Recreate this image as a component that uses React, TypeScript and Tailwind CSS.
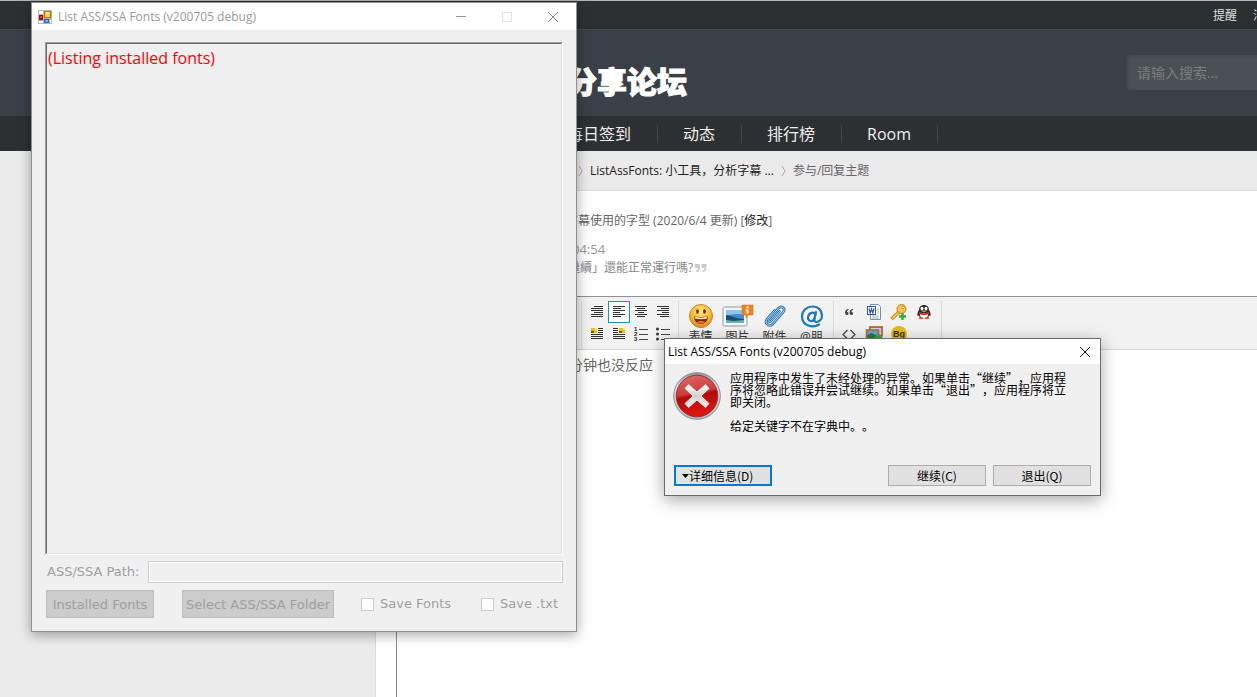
import React, { useState } from "react";
import clsx from "clsx";

type Tool = { label: string; icon: React.ReactNode };

/* Four text lines, each given as [start, end] */
function Lines({ rows }: { rows: [number, number][] }) {
    return (
        <svg width="16" height="16" viewBox="0 0 16 16" shapeRendering="crispEdges" aria-hidden="true">
            {rows.map(([a, b], i) => (
                <rect key={i} x={a} y={2 + i * 2} width={b - a} height="1" fill="#333" />
            ))}
        </svg>
    );
}

function FloatIcon({ right }: { right?: boolean }) {
    return (
        <svg width="16" height="16" viewBox="0 0 16 16" shapeRendering="crispEdges" aria-hidden="true">
            <g fill="#333">
                <rect x={right ? 2 : 9} y="2" width="5" height="1" />
                <rect x={right ? 2 : 9} y="4" width="5" height="1" />
                <rect x={right ? 2 : 9} y="6" width="5" height="1" />
                <rect x="2" y="8" width="12" height="1" />
                <rect x="2" y="10" width="12" height="1" />
                <rect x="2" y="12" width="12" height="1" />
            </g>
            <rect x={right ? 8 : 2} y="2" width="6" height="5" fill="#e8c020" />
            <rect x={right ? 8 : 2} y="5" width="3" height="2" fill="#7a5a10" />
            <rect x={right ? 12 : 6} y="2" width="2" height="2" fill="#f8e890" />
        </svg>
    );
}

function ListIcon({ ordered }: { ordered?: boolean }) {
    return (
        <svg width="16" height="16" viewBox="0 0 16 16" aria-hidden="true">
            <g fill="#444" shapeRendering="crispEdges">
                <rect x="6" y="3" width="9" height="1" />
                <rect x="6" y="8" width="9" height="1" />
                <rect x="6" y="13" width="9" height="1" />
            </g>
            {[2, 7, 12].map((y, i) =>
                ordered ? (
                    <text key={y} x="1" y={y + 3} fontSize="6" fontFamily="Liberation Sans, sans-serif" fontWeight="700" fill="#222">{i + 1}</text>
                ) : (
                    <circle key={y} cx="2.5" cy={y + 1} r="1.5" fill="#333" />
                )
            )}
        </svg>
    );
}

const alignTools: Tool[] = [
    { label: "自动排版", icon: <Lines rows={[[5, 14], [2, 14], [2, 14], [5, 14], [2, 14], [2, 14]]} /> },
    { label: "居左", icon: <Lines rows={[[2, 14], [2, 10], [2, 14], [2, 9], [2, 14], [2, 10]]} /> },
    { label: "居中", icon: <Lines rows={[[2, 14], [4, 12], [2, 14], [5, 11], [2, 14], [4, 12]]} /> },
    { label: "居右", icon: <Lines rows={[[2, 14], [6, 14], [2, 14], [7, 14], [2, 14], [5, 14]]} /> },
    { label: "左浮动", icon: <FloatIcon /> },
    { label: "右浮动", icon: <FloatIcon right /> },
    { label: "排序的列表", icon: <ListIcon ordered /> },
    { label: "未排序列表", icon: <ListIcon /> },
];

const mediaTools: Tool[] = [
    {
        label: "表情",
        icon: (
            <svg width="26" height="26" viewBox="0 0 26 26" aria-hidden="true">
                <defs>
                    <radialGradient id="face" cx="50%" cy="30%" r="70%">
                        <stop offset="0" stopColor="#ffe58a" />
                        <stop offset="0.6" stopColor="#fbb92c" />
                        <stop offset="1" stopColor="#dd8712" />
                    </radialGradient>
                </defs>
                <circle cx="13" cy="13" r="11.5" fill="url(#face)" stroke="#bb8730" />
                <ellipse cx="9.500" cy="8.500" rx="1.4" ry="2.3" fill="#6b3308" />
                <ellipse cx="16.500" cy="8.500" rx="1.4" ry="2.3" fill="#6b3308" />
                <path d="M6 13c4 1.500 10 1.500 14 0 0 5-3 8-7 8s-7-3-7-8z" fill="#7b2d0a" />
                <path d="M6.500 13.500c4 1.500 9 1.500 13 0l-.5 2c-4 1-8 1-12 0z" fill="#ffe9cf" />
                <path d="M9 19c2-1.500 6-1.500 8 0-2 2-6 2-8 0z" fill="#ef6a45" />
            </svg>
        ),
    },
    {
        label: "图片",
        icon: (
            <svg width="32" height="26" viewBox="0 0 32 26" aria-hidden="true">
                <rect x="1" y="4" width="24" height="19" rx="1.500" fill="#f3f6f8" stroke="#8d9aa5" />
                <rect x="4" y="7" width="18" height="13" fill="#3f8fd4" />
                <path d="M4 7h18v5c-5-2-12-1-18 1z" fill="#8cc4ee" />
                <path d="M4 12c5 0 7 3 18 4v4h-18z" fill="#1d4d75" />
                <path d="M4 17l7 1 11-1v3h-18z" fill="#6fb0a8" />
                <path d="M20 2h11v10h-5l-2 3v-3h-4z" fill="#f08019" stroke="#d96d0c" strokeWidth=".5" />
                <rect x="24.500" y="3.500" width="2" height="2" fill="#fff" />
                <path d="M23.500 6.500h3v4h-2v-3h-1z" fill="#fff" />
            </svg>
        ),
    },
    {
        label: "附件",
        icon: (
            <svg width="26" height="26" viewBox="0 0 26 26" fill="none" strokeLinecap="round" strokeLinejoin="round" aria-hidden="true">
                <path d="M17.500 8.500l-8.500 9.500c-1.500 1.500-3.500 0-2.200-1.800l9.700-11c3-3.300 7.500.3 4.800 3.800l-10.300 11.800c-3.500 4-9-.5-6-4.600l7.500-8.700" stroke="#2a73ad" strokeWidth="2.600" />
                <path d="M17.500 8.500l-8.500 9.500c-1.500 1.500-3.500 0-2.200-1.800l9.700-11c3-3.300 7.500.3 4.800 3.800l-10.300 11.800c-3.500 4-9-.5-6-4.600l7.500-8.700" stroke="#a8d4f2" strokeWidth="1" />
            </svg>
        ),
    },
    {
        label: "@朋",
        icon: (
            <svg width="26" height="26" viewBox="0 0 26 26" fill="none" stroke="#1f78b8" strokeLinecap="round" aria-hidden="true">
                <path d="M20 21.500c-6 4-17 1.500-17-8 0-6 5-10 10.500-10 6 0 9.500 4 9.500 9 0 4-3 6.500-5.500 6.500-2 0-2.500-1.500-2-3.500l1.500-6.500" strokeWidth="2.200" />
                <path d="M16.500 12c-1-3.500-6.500-3-7.500 2-.5 4 4.500 6 6.500 1.500" strokeWidth="2.200" />
            </svg>
        ),
    },
];

const extraTools: Tool[] = [
    {
        label: "引用",
        icon: (
            <svg width="16" height="16" viewBox="0 0 16 16" fill="#444" aria-hidden="true">
                <path d="M7.500 5c-2 0-3.500 1.500-3.500 3.500 0 1.500.7 2.500 1.800 2.500 1 0 1.700-.7 1.700-1.600s-.7-1.500-1.500-1.500c0-1 .5-1.700 1.500-2zM12 5c-2 0-3.500 1.500-3.500 3.500 0 1.500.7 2.500 1.800 2.500 1 0 1.700-.7 1.700-1.600s-.7-1.500-1.500-1.500c0-1 .5-1.700 1.500-2z" />
            </svg>
        ),
    },
    {
        label: "Word",
        icon: (
            <svg width="16" height="16" viewBox="0 0 16 16" fill="none" aria-hidden="true">
                <path d="M4.500.5h8l2 2.500v12.500h-10z" fill="#fff" stroke="#7d9097" />
                <path d="M11 5h2M11 7h2M11 9h2M6 12h7M6 14h7" stroke="#9fb6c8" />
                <rect x="1.500" y="2.500" width="8" height="8" fill="#fff" stroke="#2757a6" />
                <path d="M3 4.500l1.200 4.500 1.300-4 1.300 4 1.200-4.500" stroke="#2757a6" strokeWidth="1.200" />
            </svg>
        ),
    },
    {
        label: "密码",
        icon: (
            <svg width="18" height="18" viewBox="0 0 18 18" fill="none" aria-hidden="true">
                <path d="M10 8l-8.500 8" stroke="#b97f12" strokeWidth="3.500" />
                <path d="M10 8l-8 7.500" stroke="#f3c344" strokeWidth="1.800" />
                <circle cx="11.500" cy="6" r="4.500" fill="#f5c64b" stroke="#bb8415" />
                <circle cx="13" cy="4.500" r="1.300" fill="#fff" stroke="#a87410" strokeWidth=".6" />
                <path d="M12.500 10v7M9 13.500h7" stroke="#35ad38" strokeWidth="2.400" />
            </svg>
        ),
    },
    {
        label: "QQ",
        icon: (
            <svg width="16" height="16" viewBox="0 0 16 16" aria-hidden="true">
                <path d="M8 1c3.500 0 5 2.500 5 5 1.500 2 2 4 1.300 6l-1.300-.5-1 2.500h-8l-1-2.500-1.300.5c-.7-2-.2-4 1.300-6 0-2.500 1.500-5 5-5z" fill="#2c2c2c" />
                <path d="M4 9h8c.5 3-1 5-4 5s-4.500-2-4-5z" fill="#fff" />
                <ellipse cx="6" cy="4.500" rx="1.500" ry="1.700" fill="#fff" />
                <ellipse cx="10" cy="4.500" rx="1.500" ry="1.700" fill="#fff" />
                <path d="M4.500 6.500h7l-3.500 1.800z" fill="#f5a81c" />
                <path d="M3 8c3 1.500 7 1.500 10 0v2c-3 1.500-7 1.500-10 0z" fill="#db2b23" />
                <ellipse cx="5" cy="14.300" rx="2.500" ry="1" fill="#d8632a" />
                <ellipse cx="11" cy="14.300" rx="2.500" ry="1" fill="#d8632a" />
            </svg>
        ),
    },
    {
        label: "代码",
        icon: (
            <svg width="16" height="16" viewBox="0 0 16 16" fill="none" stroke="#444" strokeWidth="1.200" aria-hidden="true">
                <path d="M6.500 4l-4.500 4.500 4.500 4.500M9.500 4l4.500 4.500-4.500 4.500" />
            </svg>
        ),
    },
    {
        label: "相册",
        icon: (
            <svg width="18" height="16" viewBox="0 0 18 16" fill="none" aria-hidden="true">
                <rect x="5" y="1" width="12" height="9" fill="#b7d9f4" stroke="#b5521b" strokeWidth="1.600" />
                <rect x="1.500" y="4" width="12" height="9" fill="#63a5dd" stroke="#c4662a" strokeWidth="1.600" />
                <path d="M2.500 9l4-2 6 3v2h-10z" fill="#2a7a35" />
                <path d="M13.500 8v7M10 11.500h7" stroke="#35ad38" strokeWidth="2.400" />
            </svg>
        ),
    },
    {
        label: "背景音乐",
        icon: (
            <svg width="16" height="16" viewBox="0 0 16 16" aria-hidden="true">
                <circle cx="8" cy="8" r="8" fill="#e3b91b" />
                <text x="8" y="11" textAnchor="middle" fontSize="9" fontFamily="Liberation Sans, sans-serif" fontWeight="700" fill="#3c3208">Bg</text>
            </svg>
        ),
    },
];

const navItems = ["每日签到", "动态", "排行榜", "Room"];

function CrumbArrow() {
    return (
        <svg width="5" height="12" viewBox="0 0 5 12" fill="none" stroke="#aaa" aria-hidden="true">
            <path d="M1 1l3 5-3 5" />
        </svg>
    );
}

function CloseIcon({ color }: { color: string }) {
    return (
        <svg width="12" height="12" viewBox="0 0 12 12" fill="none" stroke={color} aria-hidden="true">
            <path d="M1 1l10 10M11 1L1 11" />
        </svg>
    );
}

function Toolbar() {
    const [align, setAlign] = useState("居左");

    return (
        <div className="flex h-[53px] items-start overflow-hidden border-b border-[#d5d5d5] bg-[#f2f2f2] pt-1 pl-[184px]">
            <div className="flex h-12 items-start border-x border-[#dcdcdc] px-1">
                <div className="grid grid-cols-4">
                    {alignTools.map((t) => (
                        <button key={t.label} aria-label={t.label} onClick={() => setAlign(t.label)}
                            className={clsx("flex size-[22px] items-center justify-center border", align === t.label ? "border-[#1595c5] bg-white" : "border-transparent")}>
                            {t.icon}
                        </button>
                    ))}
                </div>
            </div>
            <div className="flex h-12 items-start border-r border-[#dcdcdc] px-[3px]">
                {mediaTools.map((t) => (
                    <button key={t.label} className="flex w-[37px] shrink-0 flex-col items-center text-[12px] leading-4 whitespace-nowrap text-[#333]">
                        <span className="flex h-7 items-end">{t.icon}</span>
                        <span>{t.label}</span>
                    </button>
                ))}
            </div>
            <div className="grid h-12 grid-cols-4 content-start border-r border-[#dcdcdc] pr-[5px] pl-[2px]">
                {extraTools.map((t) => (
                    <button key={t.label} aria-label={t.label} className="flex h-[22px] w-[25px] items-center justify-center">
                        {t.icon}
                    </button>
                ))}
            </div>
        </div>
    );
}

function Forum() {
    return (
        <div className="flex min-h-screen flex-col bg-[#ebebeb] text-[12px] whitespace-nowrap">
            <header className="text-white">
                <div className="flex h-[30px] items-center justify-end gap-4 border-t border-b border-t-[#b2b5b3] border-b-[#42484d] bg-[#2d3032] pt-[2px] text-[#ddd]">
                    <a href="#notice">提醒</a>
                    <a href="#message" className="-mr-5">消息</a>
                </div>
                <div className="flex h-[86px] items-start justify-between bg-[#3a4047] pt-[25px] pl-[567px]">
                    <a href="#home" className="pt-[9px] text-[30px] leading-9 font-black [-webkit-text-stroke:1px_white]">分享论坛</a>
                    <input type="search" aria-label="搜索" placeholder="请输入搜索..."
                        className="-mr-5 h-[35px] w-[150px] rounded-[3px] bg-[#495056] px-[10px] text-[14px] text-white shadow-[inset_1px_1px_3px_#41474d] placeholder:text-[#7d7d7d]" />
                </div>
                <nav className="flex h-[35px] items-center bg-[#2d3032] pl-[542px] text-[16px]">
                    {navItems.map((n) => (
                        <a key={n} href="#nav" className="flex h-[18px] items-center border-r border-[#42464a] pr-[26px] pl-[25px] text-[#eee]">{n}</a>
                    ))}
                </nav>
            </header>
            <div className="flex flex-1">
                <aside className="w-[376px] shrink-0 border-r border-[#dcdcdc]" />
                <div className="flex min-w-0 flex-1 flex-col bg-white">
                    <div className="flex h-10 items-center gap-[7px] border-b border-[#dcdcdc] bg-[#eaeaea] pl-[202px] text-[#666]">
                        <CrumbArrow />
                        <a href="#topic" className="text-[#222]">ListAssFonts: 小工具，分析字幕 ...</a>
                        <CrumbArrow />
                        <span>参与/回复主题</span>
                    </div>
                    <main className="flex flex-1 flex-col pl-5">
                        <div className="flex h-[105px] flex-col pt-5 pl-[170px] text-[#666]">
                            <p className="leading-5">字幕使用的字型 (2020/6/4 更新) [<a href="#edit" className="text-[#222]">修改</a>]</p>
                            <p className="pt-2 pl-[6px] text-[13px] leading-5 text-[#999]">04:54</p>
                            <p className="flex items-center gap-[2px] pl-[2px] leading-[18px] text-[#888]">
                                繼續」還能正常運行嗎?
                                <svg width="12" height="8" viewBox="0 0 12 8" fill="#ccc" aria-hidden="true">
                                    <path d="M0 0h5v4c0 2-1.500 4-4 4v-1.500c1.200-.3 1.800-1 2-2.500H0zM6.500 0h5v4c0 2-1.500 4-4 4v-1.500c1.200-.3 1.800-1 2-2.500h-3z" />
                                </svg>
                            </p>
                        </div>
                        <div className="flex-1 border-t border-l border-[#909090]">
                            <Toolbar />
                            <p className="pt-[5px] pl-[172px] text-[14px] leading-5 text-[#666]">分钟也没反应</p>
                        </div>
                    </main>
                </div>
            </div>
        </div>
    );
}

function FontsWindow() {
    return (
        <section className="absolute top-[2px] left-[31px] w-[546px] border border-[#8f9090] bg-[#f0f0f0] shadow-[0_3px_12px_rgba(0,0,0,0.35)]">
            <div className="flex h-[27px] items-center bg-white pl-[6px] text-[12px] text-[#999]">
                <svg width="14" height="14" viewBox="0 0 14 14" shapeRendering="crispEdges" aria-hidden="true">
                    <rect width="14" height="14" fill="#b5b5b5" />
                    <path d="M1 1h4v3H1zM1 11h4v2H1zM12 10h1v3h-1z" fill="#fff" />
                    <rect x="6" y="1" width="7" height="7" fill="#b07d08" />
                    <rect x="7" y="2" width="5" height="5" fill="#fbcb35" />
                    <rect x="8" y="2" width="3" height="2" fill="#fde898" />
                    <rect x="1" y="5" width="4" height="5" fill="#8e1410" />
                    <rect x="2" y="6" width="2" height="2" fill="#e4452c" />
                    <rect x="6" y="9" width="5" height="4" fill="#2a63c8" />
                    <rect x="7" y="10" width="3" height="2" fill="#75acf5" />
                </svg>
                <h2 className="pl-[6px]">List ASS/SSA Fonts (v200705 debug)</h2>
                <div className="ml-auto flex">
                    <button aria-label="最小化" className="flex h-[26px] w-[46px] items-center justify-center">
                        <span className="w-[10px] border-t border-[#999]" />
                    </button>
                    <button aria-label="最大化" disabled className="flex h-[26px] w-[46px] items-center justify-center">
                        <span className="size-[10px] border border-[#e4e4e4]" />
                    </button>
                    <button aria-label="关闭" className="flex h-[26px] w-[46px] items-center justify-center">
                        <CloseIcon color="#888" />
                    </button>
                </div>
            </div>
            <div className="px-[13px] pt-3 pb-[13px] font-['DejaVu_Sans',sans-serif] text-[13px] text-[#a0a0a0]">
                <div className="border border-t-[#a0a0a0] border-r-white border-b-white border-l-[#a0a0a0]">
                    <textarea readOnly aria-label="Output" defaultValue="(Listing installed fonts)"
                        className="block h-[511px] w-full resize-none border border-t-[#696969] border-r-[#e3e3e3] border-b-[#e3e3e3] border-l-[#696969] px-px py-[2px] font-['Open_Sans',sans-serif] text-[16px] leading-6 text-[#f00] outline-none" />
                </div>
                <div className="flex items-center pt-[6px]">
                    <label htmlFor="path" className="w-[103px] pl-[2px]">ASS/SSA Path:</label>
                    <input id="path" disabled className="h-[22px] min-w-0 flex-1 border border-[#ccc] bg-[#f0f0f0] shadow-[inset_0_0_0_1px_white]" />
                </div>
                <div className="flex items-center pt-[7px] whitespace-nowrap">
                    <button disabled className="ml-px h-7 w-[108px] border border-[#bfbfbf] bg-[#ccc] pt-px">Installed Fonts</button>
                    <button disabled className="ml-7 h-7 w-[152px] border border-[#bfbfbf] bg-[#ccc] pt-px">Select ASS/SSA Folder</button>
                    <label className="ml-[27px] flex w-[120px] items-center gap-[6px]">
                        <input type="checkbox" disabled className="size-[13px] appearance-none border border-[#ccc] bg-white" />
                        Save Fonts
                    </label>
                    <label className="flex items-center gap-[6px]">
                        <input type="checkbox" disabled className="size-[13px] appearance-none border border-[#ccc] bg-white" />
                        Save .txt
                    </label>
                </div>
            </div>
        </section>
    );
}

function ErrorDialog() {
    return (
        <section role="alertdialog" aria-labelledby="error-title"
            className="absolute top-[338px] left-[664px] w-[437px] border border-[#6a6a6a] bg-[#f0f0f0] text-black shadow-[0_4px_16px_rgba(0,0,0,0.35)]">
            <div className="flex h-[25px] items-center justify-between bg-white pl-[3px] text-[12px]">
                <h2 id="error-title">List ASS/SSA Fonts (v200705 debug)</h2>
                <button aria-label="关闭" className="flex h-[25px] w-[30px] items-center justify-center">
                    <CloseIcon color="#111" />
                </button>
            </div>
            <div className="px-[9px] pt-2 pb-[9px] font-['Noto_Sans_CJK_SC',sans-serif] text-[12px] leading-3 [text-spacing-trim:space-all]">
                <div className="flex h-[93px] gap-[9px]">
                    <svg className="-ml-px shrink-0" width="48" height="48" viewBox="0 0 48 48" aria-hidden="true">
                        <defs>
                            <linearGradient id="rim" x1="0" y1="0" x2="0" y2="1">
                                <stop offset="0" stopColor="#8f9494" />
                                <stop offset="0.3" stopColor="#dfe3e3" />
                                <stop offset="1" stopColor="#b4b8b8" />
                            </linearGradient>
                            <linearGradient id="red" x1="0" y1="0" x2="0.2" y2="1">
                                <stop offset="0" stopColor="#d97070" />
                                <stop offset="0.48" stopColor="#cf3a38" />
                                <stop offset="0.56" stopColor="#b50a0a" />
                                <stop offset="1" stopColor="#e01512" />
                            </linearGradient>
                            <linearGradient id="cross" x1="0" y1="0" x2="0" y2="1">
                                <stop offset="0" stopColor="#ffffff" />
                                <stop offset="0.5" stopColor="#cfcfcf" />
                                <stop offset="1" stopColor="#f4f4f4" />
                            </linearGradient>
                        </defs>
                        <circle cx="24" cy="24" r="23.300" fill="url(#rim)" stroke="#8a8e8e" strokeWidth="1" />
                        <circle cx="24" cy="24" r="20.800" fill="url(#red)" stroke="#8c2222" strokeWidth=".8" />
                        <path d="M15.500 12.500l8.500 7.500 8.500-7.500 3.500 4-8 7.500 8 7.500-3.500 4-8.500-7.500-8.500 7.500-3.500-4 8-7.500-8-7.500z" fill="url(#cross)" strokeLinejoin="round" stroke="#e6e6e6" strokeWidth="1" />
                    </svg>
                    <div className="w-[342px]">
                        <p>应用程序中发生了未经处理的异常。如果单击“继续”，应用程<br />序将忽略此错误并尝试继续。如果单击“退出”，应用程序将立<br />即关闭。</p>
                        <p className="pt-3">给定关键字不在字典中。。</p>
                    </div>
                </div>
                <div className="flex gap-[7px]">
                    <button className="mr-auto flex h-[21px] w-[98px] items-center border-2 border-[#0078d7] bg-[#e1e1e1] pl-[6px]">
                        <svg width="7" height="4" viewBox="0 0 7 4" aria-hidden="true"><path d="M0 0h7L3.500 4z" /></svg>
                        详细信息(D)
                    </button>
                    <button className="h-[21px] w-[98px] border border-[#adadad] bg-[#e1e1e1]">继续(C)</button>
                    <button className="h-[21px] w-[98px] border border-[#adadad] bg-[#e1e1e1]">退出(Q)</button>
                </div>
            </div>
        </section>
    );
}

export default function App() {
    return (
        <div lang="zh-CN" className="relative min-h-screen overflow-hidden font-['Open_Sans','Noto_Sans_CJK_SC',sans-serif]">
            <Forum />
            <FontsWindow />
            <ErrorDialog />
        </div>
    );
}
